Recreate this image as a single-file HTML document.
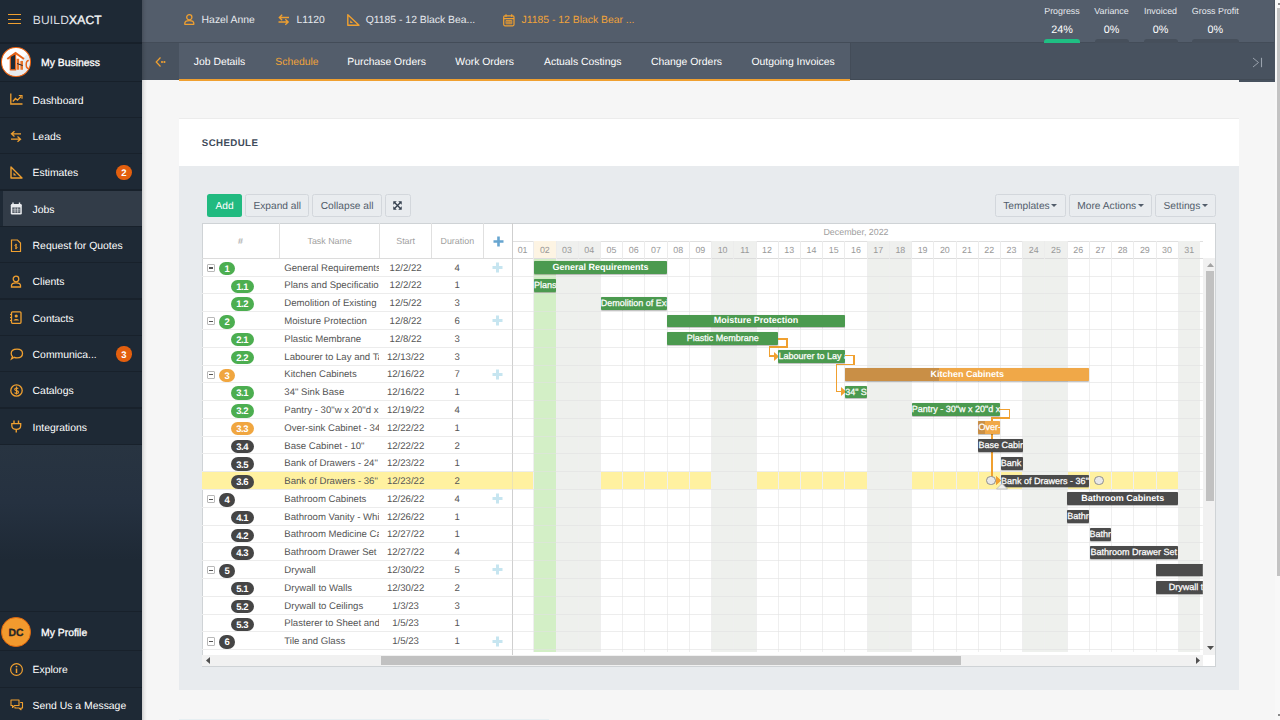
<!DOCTYPE html>
<html><head><meta charset="utf-8"><title>Buildxact Schedule</title>
<style>
*{margin:0;padding:0;box-sizing:border-box}
html,body{width:1280px;height:720px;overflow:hidden;background:#f6f6f6;font-family:"Liberation Sans", sans-serif;text-rendering:geometricPrecision}
.a{position:absolute}
.t{position:absolute;white-space:nowrap;line-height:1}
svg{position:absolute;overflow:visible}
</style></head>
<body>
<div class="a" style="left:0.00px;top:0.00px;width:142.00px;height:720.00px;background:#1e2935;"></div>
<div class="a" style="left:0.00px;top:42.00px;width:142.00px;height:1.50px;background:#17202a;"></div>
<div class="a" style="left:8.00px;top:13.70px;width:13.00px;height:1.40px;background:#f0a030;"></div>
<div class="a" style="left:8.00px;top:18.50px;width:13.00px;height:1.40px;background:#f0a030;"></div>
<div class="a" style="left:8.00px;top:22.70px;width:13.00px;height:1.40px;background:#f0a030;"></div>
<div class="t" style="left:32.70px;top:14px;font-size:12px;color:#d9dde1;letter-spacing:0.2px">BUILD<span style="color:#f2f4f6;-webkit-text-stroke:0.4px #f2f4f6">XACT</span></div>
<div class="a" style="left:0.00px;top:80.50px;width:142.00px;height:1.50px;background:#17202a;"></div>
<div class="a" style="left:1.2px;top:47.4px;width:29.5px;height:29.4px;border-radius:50%;background:linear-gradient(135deg,#fff 55%,#e9ecef 56%);border:1.6px solid #ef6512"></div>
<svg style="left:0px;top:45px" width="34" height="34" viewBox="0 0 34 34"><path d="M7.3 14 L15.5 8 L24 14" stroke="#e8641a" stroke-width="2" fill="none"/><path d="M10.3 11.5 L15.6 8.6 V24.8 H10.3 Z" fill="#1e2935" stroke="#e8641a" stroke-width="1.2"/><path d="M16.6 13.8 H19.2 V24.8 H16.6 Z M20.4 16 H23 V24.8 H20.4 Z" fill="#e8732a"/><path d="M17 18.5 L22.6 20.5" stroke="#1e2935" stroke-width="1"/><path d="M28.8 15.5 C26.4 15.5 26.2 17.5 26.2 19.5 C26.2 21.5 26.4 23.5 28.8 23.5" stroke="#e8641a" stroke-width="1.5" fill="none"/></svg>
<div class="t" style="left:41.00px;top:59px;font-size:10.4px;color:#fff;-webkit-text-stroke:0.3px #fff">My Business</div>
<svg style="left:10px;top:93.00px" width="13" height="13" viewBox="0 0 13 13"><path d="M0.8 0.5 V11 H12.5" stroke="#f0a030" stroke-width="1.3" fill="none"/><path d="M2.8 8.5 L5.5 5.5 L7.5 7.2 L11 3.5" stroke="#f0a030" stroke-width="1.3" fill="none"/><path d="M8.8 2.5 H12 V5.7" stroke="#f0a030" stroke-width="1.2" fill="none"/></svg>
<div class="t" style="left:32.60px;top:97px;font-size:10.4px;color:#fff">Dashboard</div>
<div class="a" style="left:0.00px;top:116.73px;width:142.00px;height:1.20px;background:#18212b;"></div>
<svg style="left:10px;top:129.50px" width="13" height="13" viewBox="0 0 13 13"><path d="M11 3.8 H2 M4.5 1.2 L1.5 3.8 L4.5 6.4" stroke="#f0a030" stroke-width="1.3" fill="none"/><path d="M1 9.2 H10 M7.5 6.6 L10.5 9.2 L7.5 11.8" stroke="#f0a030" stroke-width="1.3" fill="none"/></svg>
<div class="t" style="left:32.60px;top:133px;font-size:10.4px;color:#fff">Leads</div>
<div class="a" style="left:0.00px;top:153.06px;width:142.00px;height:1.20px;background:#18212b;"></div>
<svg style="left:10px;top:165.80px" width="13" height="13" viewBox="0 0 13 13"><path d="M1 1 V12 H12 Z" stroke="#f0a030" stroke-width="1.4" fill="none" stroke-linejoin="round"/><path d="M3.5 6.5 V9.5 H6.5 Z" fill="#f0a030"/></svg>
<div class="t" style="left:32.60px;top:169px;font-size:10.4px;color:#fff">Estimates</div>
<div class="a" style="left:116.3px;top:164.70px;width:15.4px;height:15.4px;border-radius:50%;background:#e35f0e"></div>
<div class="t" style="left:116.30px;top:169px;font-size:9.5px;width:15.40px;text-align:center;color:#fff;font-weight:bold">2</div>
<div class="a" style="left:3.00px;top:190.59px;width:139.00px;height:35.50px;background:#323c48;"></div>
<div class="a" style="left:0.00px;top:189.39px;width:142.00px;height:1.20px;background:#18212b;"></div>
<svg style="left:10px;top:202.20px" width="13" height="13" viewBox="0 0 13 13"><rect x="0.8" y="2" width="11" height="10.5" rx="1.2" fill="#e9ebee"/><rect x="2.3" y="5.5" width="8" height="5.3" fill="#323c48"/><path d="M3 0.5 V3 M9.5 0.5 V3" stroke="#e9ebee" stroke-width="1.4"/><path d="M2.3 7.2 H10.3 M2.3 9 H10.3 M5 5.5 V10.8 M7.7 5.5 V10.8" stroke="#e9ebee" stroke-width="0.7"/></svg>
<div class="t" style="left:32.60px;top:206px;font-size:10.4px;color:#fff">Jobs</div>
<div class="a" style="left:0.00px;top:225.72px;width:142.00px;height:1.20px;background:#18212b;"></div>
<svg style="left:10px;top:238.50px" width="13" height="13" viewBox="0 0 13 13"><path d="M1.5 1 H7.5 L10.5 4 V12.5 H1.5 Z" stroke="#f0a030" stroke-width="1.2" fill="none"/><path d="M7 6 C5 5 4 6.5 6 7.5 C8 8.5 7 10 5 9 M6 4.8 V10.2" stroke="#f0a030" stroke-width="1" fill="none"/></svg>
<div class="t" style="left:32.60px;top:242px;font-size:10.4px;color:#fff">Request for Quotes</div>
<div class="a" style="left:0.00px;top:262.05px;width:142.00px;height:1.20px;background:#18212b;"></div>
<svg style="left:10px;top:274.50px" width="13" height="13" viewBox="0 0 13 13"><circle cx="6" cy="4" r="2.8" stroke="#f0a030" stroke-width="1.3" fill="none"/><path d="M1.5 12 V10.5 C1.5 8.5 3 7.8 6 7.8 C9 7.8 10.5 8.5 10.5 10.5 V12 Z" stroke="#f0a030" stroke-width="1.3" fill="none"/></svg>
<div class="t" style="left:32.60px;top:278px;font-size:10.4px;color:#fff">Clients</div>
<div class="a" style="left:0.00px;top:298.38px;width:142.00px;height:1.20px;background:#18212b;"></div>
<svg style="left:10px;top:311.10px" width="13" height="13" viewBox="0 0 13 13"><rect x="1.5" y="0.8" width="9.5" height="11.5" rx="1" stroke="#f0a030" stroke-width="1.3" fill="none"/><circle cx="6.2" cy="5" r="1.6" fill="#f0a030"/><path d="M3.5 9.5 C4 7.5 8.5 7.5 9 9.5 Z" fill="#f0a030"/><path d="M0 3.5 H2 M0 6.5 H2 M0 9.5 H2" stroke="#f0a030" stroke-width="1"/></svg>
<div class="t" style="left:32.60px;top:315px;font-size:10.4px;color:#fff">Contacts</div>
<div class="a" style="left:0.00px;top:334.71px;width:142.00px;height:1.20px;background:#18212b;"></div>
<svg style="left:10px;top:347.50px" width="13" height="13" viewBox="0 0 13 13"><path d="M7 1.2 C10.5 1.2 12.5 3 12.5 5.5 C12.5 8 10.5 9.8 7 9.8 C6 9.8 5 9.6 4.3 9.3 L1.5 11 L2.5 8.5 C1.6 7.7 1.2 6.7 1.2 5.5 C1.2 3 3.5 1.2 7 1.2 Z" stroke="#f0a030" stroke-width="1.3" fill="none"/></svg>
<div class="t" style="left:32.60px;top:351px;font-size:10.4px;color:#fff">Communica...</div>
<div class="a" style="left:116.3px;top:346.40px;width:15.4px;height:15.4px;border-radius:50%;background:#e35f0e"></div>
<div class="t" style="left:116.30px;top:351px;font-size:9.5px;width:15.40px;text-align:center;color:#fff;font-weight:bold">3</div>
<div class="a" style="left:0.00px;top:371.04px;width:142.00px;height:1.20px;background:#18212b;"></div>
<svg style="left:10px;top:383.80px" width="13" height="13" viewBox="0 0 13 13"><circle cx="6.5" cy="6.5" r="5.7" stroke="#f0a030" stroke-width="1.3" fill="none"/><path d="M8.3 4.5 C7.5 3.7 4.5 3.7 4.7 5.5 C4.9 7 8.5 6.3 8.5 8.2 C8.5 9.7 5.5 9.6 4.5 8.6 M6.5 2.6 V10.4" stroke="#f0a030" stroke-width="1.1" fill="none"/></svg>
<div class="t" style="left:32.60px;top:387px;font-size:10.4px;color:#fff">Catalogs</div>
<div class="a" style="left:0.00px;top:407.37px;width:142.00px;height:1.20px;background:#18212b;"></div>
<svg style="left:10px;top:420.10px" width="13" height="13" viewBox="0 0 13 13"><path d="M4 0.5 V3.5 M8.5 0.5 V3.5" stroke="#f0a030" stroke-width="1.4"/><path d="M1.8 3.6 H10.7 V5.5 C10.7 8 8.7 9.4 6.25 9.4 C3.8 9.4 1.8 8 1.8 5.5 Z" stroke="#f0a030" stroke-width="1.3" fill="none"/><path d="M6.25 9.4 V12.5" stroke="#f0a030" stroke-width="1.4"/></svg>
<div class="t" style="left:32.60px;top:424px;font-size:10.4px;color:#fff">Integrations</div>
<div class="a" style="left:0.00px;top:443.70px;width:142.00px;height:1.20px;background:#18212b;"></div>
<div class="a" style="left:0.00px;top:444.90px;width:142.00px;height:115.00px;background:linear-gradient(#283441,#253140 50%,#1e2935);"></div>
<div class="a" style="left:0.00px;top:611.20px;width:142.00px;height:1.20px;background:#18212b;"></div>
<div class="a" style="left:1.3px;top:617.3px;width:29.5px;height:29.5px;border-radius:50%;background:#f29a2e;border:1.8px solid #e3680c"></div>
<div class="t" style="left:1.30px;top:629px;font-size:10.4px;width:29.50px;text-align:center;color:#262626;font-weight:bold;-webkit-text-stroke:0.3px #262626">DC</div>
<div class="t" style="left:41.00px;top:629px;font-size:10.4px;color:#fff;-webkit-text-stroke:0.3px #fff">My Profile</div>
<div class="a" style="left:0.00px;top:650.20px;width:142.00px;height:1.20px;background:#18212b;"></div>
<svg style="left:10px;top:662.5px" width="13" height="13" viewBox="0 0 13 13"><circle cx="6.5" cy="6.5" r="5.9" stroke="#f0a030" stroke-width="1.2" fill="none"/><path d="M6.5 5.5 V10" stroke="#f0a030" stroke-width="1.5"/><circle cx="6.5" cy="3.6" r="0.9" fill="#f0a030"/></svg>
<div class="t" style="left:32.60px;top:666px;font-size:10.4px;color:#fff">Explore</div>
<div class="a" style="left:0.00px;top:687.00px;width:142.00px;height:1.20px;background:#18212b;"></div>
<svg style="left:10px;top:699px" width="13" height="13" viewBox="0 0 13 13"><path d="M1 1 H9 V6.5 H4.5 L2.5 8.5 V6.5 H1 Z" stroke="#f0a030" stroke-width="1.1" fill="none" stroke-linejoin="round"/><path d="M10.2 3.5 H12.5 V9 H11 V10.8 L9 9 H5 V7.8" stroke="#f0a030" stroke-width="1.1" fill="none" stroke-linejoin="round"/></svg>
<div class="t" style="left:32.60px;top:702px;font-size:10.4px;color:#fff">Send Us a Message</div>
<div class="a" style="left:142.00px;top:0.00px;width:1132.60px;height:43.00px;background:#535d6b;"></div>
<div class="a" style="left:142.00px;top:42.00px;width:1132.60px;height:1.20px;background:#434c58;"></div>
<svg style="left:183.6px;top:14px" width="12" height="12" viewBox="0 0 12 12"><circle cx="5.3" cy="3.3" r="2.6" stroke="#f0a030" stroke-width="1.3" fill="none"/><path d="M0.8 10.3 V9.3 C0.8 7.4 2.5 6.6 5.3 6.6 C8.1 6.6 9.8 7.4 9.8 9.3 V10.3 Z" stroke="#f0a030" stroke-width="1.3" fill="none" stroke-linejoin="round"/></svg>
<div class="t" style="left:201.60px;top:16px;font-size:10.4px;color:#e6e9ee">Hazel Anne</div>
<svg style="left:277.8px;top:14px" width="12" height="12" viewBox="0 0 12 12"><path d="M11 3.5 H1.5 M4.2 0.8 L1.3 3.5 L4.2 6.2" stroke="#f0a030" stroke-width="1.3" fill="none"/><path d="M0.5 8 H10 M7.3 5.3 L10.2 8 L7.3 10.7" stroke="#f0a030" stroke-width="1.3" fill="none"/></svg>
<div class="t" style="left:296.60px;top:16px;font-size:10.4px;color:#e6e9ee">L1120</div>
<svg style="left:346.6px;top:14px" width="12" height="12" viewBox="0 0 12 12"><path d="M0.8 0.8 V11.3 H12 Z" stroke="#f0a030" stroke-width="1.4" fill="none" stroke-linejoin="round"/><path d="M3.2 6.3 V9 H6 Z" fill="#f0a030"/></svg>
<div class="t" style="left:365.70px;top:16px;font-size:10.4px;color:#e6e9ee">Q1185 - 12 Black Bea...</div>
<svg style="left:502.9px;top:14px" width="12" height="12" viewBox="0 0 12 12"><rect x="0.7" y="1.8" width="10.3" height="10" rx="1.2" stroke="#f0a030" stroke-width="1.2" fill="none"/><path d="M3 0.3 V3 M8.7 0.3 V3 M0.7 4.6 H11" stroke="#f0a030" stroke-width="1.2"/><path d="M3 6.5 H8.8 V9.8 H3 Z M5 6.5 V9.8 M6.9 6.5 V9.8 M3 8.1 H8.8" stroke="#f0a030" stroke-width="0.8" fill="none"/></svg>
<div class="t" style="left:521.50px;top:16px;font-size:10.4px;color:#f0a33a">J1185 - 12 Black Bear ...</div>
<div class="t" style="left:1022.00px;top:7px;font-size:8.9px;width:80.00px;text-align:center;color:#e6e9ee">Progress</div>
<div class="t" style="left:1022.00px;top:25px;font-size:10.8px;width:80.00px;text-align:center;color:#fff">24%</div>
<div class="t" style="left:1071.50px;top:7px;font-size:8.9px;width:80.00px;text-align:center;color:#e6e9ee">Variance</div>
<div class="t" style="left:1071.50px;top:25px;font-size:10.8px;width:80.00px;text-align:center;color:#fff">0%</div>
<div class="t" style="left:1120.50px;top:7px;font-size:8.9px;width:80.00px;text-align:center;color:#e6e9ee">Invoiced</div>
<div class="t" style="left:1120.50px;top:25px;font-size:10.8px;width:80.00px;text-align:center;color:#fff">0%</div>
<div class="t" style="left:1175.30px;top:7px;font-size:8.9px;width:80.00px;text-align:center;color:#e6e9ee">Gross Profit</div>
<div class="t" style="left:1175.30px;top:25px;font-size:10.8px;width:80.00px;text-align:center;color:#fff">0%</div>
<div class="a" style="left:1044.00px;top:38.80px;width:36.00px;height:5.00px;background:#1fbf83;border-radius:3px 3px 0 0"></div>
<div class="a" style="left:1094.50px;top:38.80px;width:34.00px;height:5.00px;background:#464f5b;border-radius:3px 3px 0 0"></div>
<div class="a" style="left:1143.50px;top:38.80px;width:34.00px;height:5.00px;background:#464f5b;border-radius:3px 3px 0 0"></div>
<div class="a" style="left:1191.50px;top:38.80px;width:47.50px;height:5.00px;background:#464f5b;border-radius:3px 3px 0 0"></div>
<div class="a" style="left:142.00px;top:43.20px;width:1132.60px;height:37.30px;background:#48525f;"></div>
<div class="a" style="left:179.00px;top:43.20px;width:671.00px;height:37.30px;background:#535d6b;"></div>
<div class="a" style="left:179.00px;top:78.80px;width:671.00px;height:2.20px;background:#f0a030;"></div>
<div class="a" style="left:849.60px;top:43.20px;width:1.00px;height:37.30px;background:#434c58;"></div>
<div class="a" style="left:850.50px;top:79.40px;width:424.10px;height:1.10px;background:#414a55;"></div>
<div class="a" style="left:1238.50px;top:79.50px;width:36.10px;height:2.20px;background:#48525f;"></div>
<svg style="left:155px;top:56px" width="12" height="12" viewBox="0 0 12 12"><path d="M5.5 1.5 L1.2 6 L5.5 10.5" stroke="#f0a030" stroke-width="1.2" fill="none"/><circle cx="7" cy="6" r="0.9" fill="#f0a030"/><circle cx="9.6" cy="6" r="0.9" fill="#f0a030"/><path d="M6 6 H10" stroke="#f0a030" stroke-width="0.7"/></svg>
<div class="t" style="left:193.75px;top:58px;font-size:10.4px;color:#fff">Job Details</div>
<div class="t" style="left:275.25px;top:58px;font-size:10.4px;color:#f0a33a">Schedule</div>
<div class="t" style="left:347.30px;top:58px;font-size:10.4px;color:#fff">Purchase Orders</div>
<div class="t" style="left:455.30px;top:58px;font-size:10.4px;color:#fff">Work Orders</div>
<div class="t" style="left:544.00px;top:58px;font-size:10.4px;color:#fff">Actuals Costings</div>
<div class="t" style="left:651.00px;top:58px;font-size:10.4px;color:#fff">Change Orders</div>
<div class="t" style="left:751.50px;top:58px;font-size:10.4px;color:#fff">Outgoing Invoices</div>
<svg style="left:1251.5px;top:56.5px" width="12" height="11" viewBox="0 0 12 11"><path d="M1 1 L6.5 5.5 L1 10" stroke="#9aa2ad" stroke-width="1" fill="none"/><path d="M9.5 0.8 V10.2" stroke="#9aa2ad" stroke-width="1.1"/></svg>
<div class="a" style="left:1274.60px;top:0.00px;width:5.40px;height:720.00px;background:#f8f8f8;"></div>
<div class="a" style="left:1274.00px;top:0.00px;width:1.00px;height:81.00px;background:#4a535f;"></div>
<div class="a" style="left:1277.00px;top:8.30px;width:3.00px;height:567.30px;background:#c3c3c3;"></div>
<div class="a" style="left:1278.00px;top:2.50px;width:2.00px;height:2.20px;background:#8a8a8a;"></div>
<div class="a" style="left:1278.00px;top:714.00px;width:2.00px;height:2.20px;background:#8a8a8a;"></div>
<div class="a" style="left:178.70px;top:118.30px;width:1060.30px;height:47.60px;background:#fff;border-top:0.6px solid #ececec"></div>
<div class="a" style="left:178.70px;top:165.90px;width:1060.30px;height:524.00px;background:#e8ebee;"></div>
<div class="t" style="left:201.80px;top:139px;font-size:9.7px;font-weight:bold;color:#404b5a;letter-spacing:0.4px">SCHEDULE</div>
<div class="a" style="left:207.00px;top:194.30px;width:35.00px;height:22.40px;background:#21ba80;border-radius:2.5px"></div>
<div class="t" style="left:207.00px;top:202px;font-size:10.2px;width:35.00px;text-align:center;color:#fff">Add</div>
<div class="a" style="left:245.30px;top:194.30px;width:63.90px;height:22.40px;background:#e9ecef;border-radius:2.5px;border:0.8px solid #d3d7dc"></div>
<div class="t" style="left:245.30px;top:202px;font-size:10.2px;width:63.90px;text-align:center;color:#525d6b">Expand all</div>
<div class="a" style="left:312.40px;top:194.30px;width:69.40px;height:22.40px;background:#e9ecef;border-radius:2.5px;border:0.8px solid #d3d7dc"></div>
<div class="t" style="left:312.40px;top:202px;font-size:10.2px;width:69.40px;text-align:center;color:#525d6b">Collapse all</div>
<div class="a" style="left:385.20px;top:194.30px;width:25.60px;height:22.40px;background:#e9ecef;border-radius:2.5px;border:0.8px solid #d3d7dc"></div>
<svg style="left:393.1px;top:200.9px" width="9" height="9" viewBox="0 0 10 10"><path d="M2 2 L8 8 M8 2 L2 8" stroke="#36414f" stroke-width="1.5"/><path d="M0.3 0.3 H4.2 L0.3 4.2 Z M9.7 0.3 H5.8 L9.7 4.2 Z M0.3 9.7 H4.2 L0.3 5.8 Z M9.7 9.7 H5.8 L9.7 5.8 Z" fill="#36414f"/></svg>
<div class="a" style="left:994.75px;top:194.30px;width:70.95px;height:22.40px;background:#e9ecef;border-radius:2.5px;border:0.8px solid #d3d7dc"></div>
<div class="t" style="left:994.75px;top:202px;font-size:10.2px;width:70.95px;text-align:center;color:#525d6b">Templates<span style="display:inline-block;width:0;height:0;border-left:3px solid transparent;border-right:3px solid transparent;border-top:3px solid #525d6b;vertical-align:middle;margin-left:1.5px;position:relative;top:-1px"></span></div>
<div class="a" style="left:1069.00px;top:194.30px;width:83.00px;height:22.40px;background:#e9ecef;border-radius:2.5px;border:0.8px solid #d3d7dc"></div>
<div class="t" style="left:1069.00px;top:202px;font-size:10.2px;width:83.00px;text-align:center;color:#525d6b">More Actions<span style="display:inline-block;width:0;height:0;border-left:3px solid transparent;border-right:3px solid transparent;border-top:3px solid #525d6b;vertical-align:middle;margin-left:1.5px;position:relative;top:-1px"></span></div>
<div class="a" style="left:1155.30px;top:194.30px;width:60.80px;height:22.40px;background:#e9ecef;border-radius:2.5px;border:0.8px solid #d3d7dc"></div>
<div class="t" style="left:1155.30px;top:202px;font-size:10.2px;width:60.80px;text-align:center;color:#525d6b">Settings<span style="display:inline-block;width:0;height:0;border-left:3px solid transparent;border-right:3px solid transparent;border-top:3px solid #525d6b;vertical-align:middle;margin-left:1.5px;position:relative;top:-1px"></span></div>
<div class="a" style="left:201.50px;top:222.70px;width:1014.50px;height:444.30px;background:#fff;border:0.8px solid #cfd3d6"></div>
<div class="a" style="left:278.90px;top:222.70px;width:1.00px;height:35.60px;background:#e0e0e0;"></div>
<div class="a" style="left:378.90px;top:222.70px;width:1.00px;height:35.60px;background:#e0e0e0;"></div>
<div class="a" style="left:430.75px;top:222.70px;width:1.00px;height:35.60px;background:#e0e0e0;"></div>
<div class="a" style="left:482.60px;top:222.70px;width:1.00px;height:35.60px;background:#e0e0e0;"></div>
<div class="t" style="left:200.50px;top:237px;font-size:8.9px;width:80.00px;text-align:center;color:#a0a0a0">#</div>
<div class="t" style="left:289.70px;top:237px;font-size:8.9px;width:80.00px;text-align:center;color:#a0a0a0">Task Name</div>
<div class="t" style="left:365.60px;top:237px;font-size:8.9px;width:80.00px;text-align:center;color:#a0a0a0">Start</div>
<div class="t" style="left:417.30px;top:237px;font-size:8.9px;width:80.00px;text-align:center;color:#a0a0a0">Duration</div>
<svg style="left:492.5px;top:235.5px" width="11" height="11" viewBox="0 0 11 11"><path d="M5.5 0.5 V10.5 M0.5 5.5 H10.5" stroke="#67a5d0" stroke-width="2.6"/></svg>
<div class="t" style="left:781.00px;top:228px;font-size:8.9px;width:150.00px;text-align:center;color:#a0a0a0">December, 2022</div>
<div class="a" style="left:512.40px;top:240.60px;width:690.40px;height:1.00px;background:#e0e0e0;"></div>
<div class="t" style="left:511.50px;top:246px;font-size:8.9px;width:22.22px;text-align:center;color:#999">01</div>
<div class="a" style="left:533.72px;top:241.10px;width:22.22px;height:17.20px;background:#fdf4e3;"></div>
<div class="a" style="left:533.32px;top:241.10px;width:0.80px;height:17.20px;background:#ececec;"></div>
<div class="t" style="left:533.72px;top:246px;font-size:8.9px;width:22.22px;text-align:center;color:#999">02</div>
<div class="a" style="left:555.94px;top:241.10px;width:22.22px;height:17.20px;background:#eff0ee;"></div>
<div class="a" style="left:555.54px;top:241.10px;width:0.80px;height:17.20px;background:#ececec;"></div>
<div class="t" style="left:555.94px;top:246px;font-size:8.9px;width:22.22px;text-align:center;color:#999">03</div>
<div class="a" style="left:578.17px;top:241.10px;width:22.22px;height:17.20px;background:#eff0ee;"></div>
<div class="a" style="left:577.77px;top:241.10px;width:0.80px;height:17.20px;background:#ececec;"></div>
<div class="t" style="left:578.17px;top:246px;font-size:8.9px;width:22.22px;text-align:center;color:#999">04</div>
<div class="a" style="left:599.99px;top:241.10px;width:0.80px;height:17.20px;background:#ececec;"></div>
<div class="t" style="left:600.39px;top:246px;font-size:8.9px;width:22.22px;text-align:center;color:#999">05</div>
<div class="a" style="left:622.21px;top:241.10px;width:0.80px;height:17.20px;background:#ececec;"></div>
<div class="t" style="left:622.61px;top:246px;font-size:8.9px;width:22.22px;text-align:center;color:#999">06</div>
<div class="a" style="left:644.43px;top:241.10px;width:0.80px;height:17.20px;background:#ececec;"></div>
<div class="t" style="left:644.83px;top:246px;font-size:8.9px;width:22.22px;text-align:center;color:#999">07</div>
<div class="a" style="left:666.65px;top:241.10px;width:0.80px;height:17.20px;background:#ececec;"></div>
<div class="t" style="left:667.05px;top:246px;font-size:8.9px;width:22.22px;text-align:center;color:#999">08</div>
<div class="a" style="left:688.88px;top:241.10px;width:0.80px;height:17.20px;background:#ececec;"></div>
<div class="t" style="left:689.28px;top:246px;font-size:8.9px;width:22.22px;text-align:center;color:#999">09</div>
<div class="a" style="left:711.50px;top:241.10px;width:22.22px;height:17.20px;background:#eff0ee;"></div>
<div class="a" style="left:711.10px;top:241.10px;width:0.80px;height:17.20px;background:#ececec;"></div>
<div class="t" style="left:711.50px;top:246px;font-size:8.9px;width:22.22px;text-align:center;color:#999">10</div>
<div class="a" style="left:733.72px;top:241.10px;width:22.22px;height:17.20px;background:#eff0ee;"></div>
<div class="a" style="left:733.32px;top:241.10px;width:0.80px;height:17.20px;background:#ececec;"></div>
<div class="t" style="left:733.72px;top:246px;font-size:8.9px;width:22.22px;text-align:center;color:#999">11</div>
<div class="a" style="left:755.54px;top:241.10px;width:0.80px;height:17.20px;background:#ececec;"></div>
<div class="t" style="left:755.94px;top:246px;font-size:8.9px;width:22.22px;text-align:center;color:#999">12</div>
<div class="a" style="left:777.76px;top:241.10px;width:0.80px;height:17.20px;background:#ececec;"></div>
<div class="t" style="left:778.16px;top:246px;font-size:8.9px;width:22.22px;text-align:center;color:#999">13</div>
<div class="a" style="left:799.99px;top:241.10px;width:0.80px;height:17.20px;background:#ececec;"></div>
<div class="t" style="left:800.39px;top:246px;font-size:8.9px;width:22.22px;text-align:center;color:#999">14</div>
<div class="a" style="left:822.21px;top:241.10px;width:0.80px;height:17.20px;background:#ececec;"></div>
<div class="t" style="left:822.61px;top:246px;font-size:8.9px;width:22.22px;text-align:center;color:#999">15</div>
<div class="a" style="left:844.43px;top:241.10px;width:0.80px;height:17.20px;background:#ececec;"></div>
<div class="t" style="left:844.83px;top:246px;font-size:8.9px;width:22.22px;text-align:center;color:#999">16</div>
<div class="a" style="left:867.05px;top:241.10px;width:22.22px;height:17.20px;background:#eff0ee;"></div>
<div class="a" style="left:866.65px;top:241.10px;width:0.80px;height:17.20px;background:#ececec;"></div>
<div class="t" style="left:867.05px;top:246px;font-size:8.9px;width:22.22px;text-align:center;color:#999">17</div>
<div class="a" style="left:889.27px;top:241.10px;width:22.22px;height:17.20px;background:#eff0ee;"></div>
<div class="a" style="left:888.87px;top:241.10px;width:0.80px;height:17.20px;background:#ececec;"></div>
<div class="t" style="left:889.27px;top:246px;font-size:8.9px;width:22.22px;text-align:center;color:#999">18</div>
<div class="a" style="left:911.10px;top:241.10px;width:0.80px;height:17.20px;background:#ececec;"></div>
<div class="t" style="left:911.50px;top:246px;font-size:8.9px;width:22.22px;text-align:center;color:#999">19</div>
<div class="a" style="left:933.32px;top:241.10px;width:0.80px;height:17.20px;background:#ececec;"></div>
<div class="t" style="left:933.72px;top:246px;font-size:8.9px;width:22.22px;text-align:center;color:#999">20</div>
<div class="a" style="left:955.54px;top:241.10px;width:0.80px;height:17.20px;background:#ececec;"></div>
<div class="t" style="left:955.94px;top:246px;font-size:8.9px;width:22.22px;text-align:center;color:#999">21</div>
<div class="a" style="left:977.76px;top:241.10px;width:0.80px;height:17.20px;background:#ececec;"></div>
<div class="t" style="left:978.16px;top:246px;font-size:8.9px;width:22.22px;text-align:center;color:#999">22</div>
<div class="a" style="left:999.98px;top:241.10px;width:0.80px;height:17.20px;background:#ececec;"></div>
<div class="t" style="left:1000.38px;top:246px;font-size:8.9px;width:22.22px;text-align:center;color:#999">23</div>
<div class="a" style="left:1022.61px;top:241.10px;width:22.22px;height:17.20px;background:#eff0ee;"></div>
<div class="a" style="left:1022.21px;top:241.10px;width:0.80px;height:17.20px;background:#ececec;"></div>
<div class="t" style="left:1022.61px;top:246px;font-size:8.9px;width:22.22px;text-align:center;color:#999">24</div>
<div class="a" style="left:1044.83px;top:241.10px;width:22.22px;height:17.20px;background:#eff0ee;"></div>
<div class="a" style="left:1044.43px;top:241.10px;width:0.80px;height:17.20px;background:#ececec;"></div>
<div class="t" style="left:1044.83px;top:246px;font-size:8.9px;width:22.22px;text-align:center;color:#999">25</div>
<div class="a" style="left:1066.65px;top:241.10px;width:0.80px;height:17.20px;background:#ececec;"></div>
<div class="t" style="left:1067.05px;top:246px;font-size:8.9px;width:22.22px;text-align:center;color:#999">26</div>
<div class="a" style="left:1088.87px;top:241.10px;width:0.80px;height:17.20px;background:#ececec;"></div>
<div class="t" style="left:1089.27px;top:246px;font-size:8.9px;width:22.22px;text-align:center;color:#999">27</div>
<div class="a" style="left:1111.09px;top:241.10px;width:0.80px;height:17.20px;background:#ececec;"></div>
<div class="t" style="left:1111.49px;top:246px;font-size:8.9px;width:22.22px;text-align:center;color:#999">28</div>
<div class="a" style="left:1133.32px;top:241.10px;width:0.80px;height:17.20px;background:#ececec;"></div>
<div class="t" style="left:1133.72px;top:246px;font-size:8.9px;width:22.22px;text-align:center;color:#999">29</div>
<div class="a" style="left:1155.54px;top:241.10px;width:0.80px;height:17.20px;background:#ececec;"></div>
<div class="t" style="left:1155.94px;top:246px;font-size:8.9px;width:22.22px;text-align:center;color:#999">30</div>
<div class="a" style="left:1178.16px;top:241.10px;width:22.22px;height:17.20px;background:#eff0ee;"></div>
<div class="a" style="left:1177.76px;top:241.10px;width:0.80px;height:17.20px;background:#ececec;"></div>
<div class="t" style="left:1178.16px;top:246px;font-size:8.9px;width:22.22px;text-align:center;color:#999">31</div>
<div class="a" style="left:201.50px;top:257.70px;width:1001.30px;height:1.20px;background:#dcdcdc;"></div>
<div class="a" style="left:202.30px;top:275.59px;width:309.60px;height:0.90px;background:#ececec;"></div>
<div class="a" style="left:206.80px;top:263.89px;width:8.10px;height:8.20px;background:#fff;border:0.9px solid #b8b8b8;border-radius:1px"></div>
<div class="a" style="left:209.00px;top:267.44px;width:3.80px;height:1.30px;background:#555;"></div>
<div class="a" style="left:219.20px;top:261.79px;width:15.60px;height:13.50px;background:#4cae50;border-radius:7px"></div>
<div class="t" style="left:219.20px;top:265px;font-size:9.5px;width:15.60px;text-align:center;color:#fff;font-weight:bold;letter-spacing:-0.2px">1</div>
<div class="a" style="left:284.3px;top:262.69px;width:95px;overflow:hidden;white-space:nowrap;font-size:9.6px;line-height:11px;color:#555">General Requirements</div>
<div class="t" style="left:380px;width:51.25px;text-align:center;top:262.69px;font-size:9.6px;line-height:11px;color:#555">12/2/22</div>
<div class="t" style="left:431.25px;width:51.85px;text-align:center;top:262.69px;font-size:9.6px;line-height:11px;color:#555">4</div>
<svg style="left:492px;top:261.99px" width="11" height="11" viewBox="0 0 11 11"><path d="M5.5 0.5 V10.5 M0.5 5.5 H10.5" stroke="#c6e5f0" stroke-width="3"/></svg>
<div class="a" style="left:202.30px;top:293.37px;width:309.60px;height:0.90px;background:#ececec;"></div>
<div class="a" style="left:230.90px;top:279.58px;width:22.70px;height:13.50px;background:#4cae50;border-radius:7px"></div>
<div class="t" style="left:230.90px;top:283px;font-size:9.5px;width:22.70px;text-align:center;color:#fff;font-weight:bold;letter-spacing:-0.4px">1.1</div>
<div class="a" style="left:284.3px;top:280.48px;width:95px;overflow:hidden;white-space:nowrap;font-size:9.6px;line-height:11px;color:#555">Plans and Specificatio</div>
<div class="t" style="left:380px;width:51.25px;text-align:center;top:280.48px;font-size:9.6px;line-height:11px;color:#555">12/2/22</div>
<div class="t" style="left:431.25px;width:51.85px;text-align:center;top:280.48px;font-size:9.6px;line-height:11px;color:#555">1</div>
<div class="a" style="left:202.30px;top:311.16px;width:309.60px;height:0.90px;background:#ececec;"></div>
<div class="a" style="left:230.90px;top:297.37px;width:22.70px;height:13.50px;background:#4cae50;border-radius:7px"></div>
<div class="t" style="left:230.90px;top:300px;font-size:9.5px;width:22.70px;text-align:center;color:#fff;font-weight:bold;letter-spacing:-0.4px">1.2</div>
<div class="a" style="left:284.3px;top:298.26px;width:95px;overflow:hidden;white-space:nowrap;font-size:9.6px;line-height:11px;color:#555">Demolition of Existing</div>
<div class="t" style="left:380px;width:51.25px;text-align:center;top:298.26px;font-size:9.6px;line-height:11px;color:#555">12/5/22</div>
<div class="t" style="left:431.25px;width:51.85px;text-align:center;top:298.26px;font-size:9.6px;line-height:11px;color:#555">3</div>
<div class="a" style="left:202.30px;top:328.94px;width:309.60px;height:0.90px;background:#ececec;"></div>
<div class="a" style="left:206.80px;top:317.25px;width:8.10px;height:8.20px;background:#fff;border:0.9px solid #b8b8b8;border-radius:1px"></div>
<div class="a" style="left:209.00px;top:320.80px;width:3.80px;height:1.30px;background:#555;"></div>
<div class="a" style="left:219.20px;top:315.15px;width:15.60px;height:13.50px;background:#4cae50;border-radius:7px"></div>
<div class="t" style="left:219.20px;top:318px;font-size:9.5px;width:15.60px;text-align:center;color:#fff;font-weight:bold;letter-spacing:-0.2px">2</div>
<div class="a" style="left:284.3px;top:316.05px;width:95px;overflow:hidden;white-space:nowrap;font-size:9.6px;line-height:11px;color:#555">Moisture Protection</div>
<div class="t" style="left:380px;width:51.25px;text-align:center;top:316.05px;font-size:9.6px;line-height:11px;color:#555">12/8/22</div>
<div class="t" style="left:431.25px;width:51.85px;text-align:center;top:316.05px;font-size:9.6px;line-height:11px;color:#555">6</div>
<svg style="left:492px;top:315.35px" width="11" height="11" viewBox="0 0 11 11"><path d="M5.5 0.5 V10.5 M0.5 5.5 H10.5" stroke="#c6e5f0" stroke-width="3"/></svg>
<div class="a" style="left:202.30px;top:346.73px;width:309.60px;height:0.90px;background:#ececec;"></div>
<div class="a" style="left:230.90px;top:332.94px;width:22.70px;height:13.50px;background:#4cae50;border-radius:7px"></div>
<div class="t" style="left:230.90px;top:336px;font-size:9.5px;width:22.70px;text-align:center;color:#fff;font-weight:bold;letter-spacing:-0.4px">2.1</div>
<div class="a" style="left:284.3px;top:333.84px;width:95px;overflow:hidden;white-space:nowrap;font-size:9.6px;line-height:11px;color:#555">Plastic Membrane</div>
<div class="t" style="left:380px;width:51.25px;text-align:center;top:333.84px;font-size:9.6px;line-height:11px;color:#555">12/8/22</div>
<div class="t" style="left:431.25px;width:51.85px;text-align:center;top:333.84px;font-size:9.6px;line-height:11px;color:#555">3</div>
<div class="a" style="left:202.30px;top:364.52px;width:309.60px;height:0.90px;background:#ececec;"></div>
<div class="a" style="left:230.90px;top:350.72px;width:22.70px;height:13.50px;background:#4cae50;border-radius:7px"></div>
<div class="t" style="left:230.90px;top:354px;font-size:9.5px;width:22.70px;text-align:center;color:#fff;font-weight:bold;letter-spacing:-0.4px">2.2</div>
<div class="a" style="left:284.3px;top:351.62px;width:95px;overflow:hidden;white-space:nowrap;font-size:9.6px;line-height:11px;color:#555">Labourer to Lay and Tape</div>
<div class="t" style="left:380px;width:51.25px;text-align:center;top:351.62px;font-size:9.6px;line-height:11px;color:#555">12/13/22</div>
<div class="t" style="left:431.25px;width:51.85px;text-align:center;top:351.62px;font-size:9.6px;line-height:11px;color:#555">3</div>
<div class="a" style="left:202.30px;top:382.30px;width:309.60px;height:0.90px;background:#ececec;"></div>
<div class="a" style="left:206.80px;top:370.61px;width:8.10px;height:8.20px;background:#fff;border:0.9px solid #b8b8b8;border-radius:1px"></div>
<div class="a" style="left:209.00px;top:374.16px;width:3.80px;height:1.30px;background:#555;"></div>
<div class="a" style="left:219.20px;top:368.51px;width:15.60px;height:13.50px;background:#f0a640;border-radius:7px"></div>
<div class="t" style="left:219.20px;top:372px;font-size:9.5px;width:15.60px;text-align:center;color:#fff;font-weight:bold;letter-spacing:-0.2px">3</div>
<div class="a" style="left:284.3px;top:369.41px;width:95px;overflow:hidden;white-space:nowrap;font-size:9.6px;line-height:11px;color:#555">Kitchen Cabinets</div>
<div class="t" style="left:380px;width:51.25px;text-align:center;top:369.41px;font-size:9.6px;line-height:11px;color:#555">12/16/22</div>
<div class="t" style="left:431.25px;width:51.85px;text-align:center;top:369.41px;font-size:9.6px;line-height:11px;color:#555">7</div>
<svg style="left:492px;top:368.71px" width="11" height="11" viewBox="0 0 11 11"><path d="M5.5 0.5 V10.5 M0.5 5.5 H10.5" stroke="#c6e5f0" stroke-width="3"/></svg>
<div class="a" style="left:202.30px;top:400.09px;width:309.60px;height:0.90px;background:#ececec;"></div>
<div class="a" style="left:230.90px;top:386.30px;width:22.70px;height:13.50px;background:#4cae50;border-radius:7px"></div>
<div class="t" style="left:230.90px;top:389px;font-size:9.5px;width:22.70px;text-align:center;color:#fff;font-weight:bold;letter-spacing:-0.4px">3.1</div>
<div class="a" style="left:284.3px;top:387.20px;width:95px;overflow:hidden;white-space:nowrap;font-size:9.6px;line-height:11px;color:#555">34" Sink Base</div>
<div class="t" style="left:380px;width:51.25px;text-align:center;top:387.20px;font-size:9.6px;line-height:11px;color:#555">12/16/22</div>
<div class="t" style="left:431.25px;width:51.85px;text-align:center;top:387.20px;font-size:9.6px;line-height:11px;color:#555">1</div>
<div class="a" style="left:202.30px;top:417.87px;width:309.60px;height:0.90px;background:#ececec;"></div>
<div class="a" style="left:230.90px;top:404.08px;width:22.70px;height:13.50px;background:#4cae50;border-radius:7px"></div>
<div class="t" style="left:230.90px;top:407px;font-size:9.5px;width:22.70px;text-align:center;color:#fff;font-weight:bold;letter-spacing:-0.4px">3.2</div>
<div class="a" style="left:284.3px;top:404.98px;width:95px;overflow:hidden;white-space:nowrap;font-size:9.6px;line-height:11px;color:#555">Pantry - 30"w x 20"d x 84"h</div>
<div class="t" style="left:380px;width:51.25px;text-align:center;top:404.98px;font-size:9.6px;line-height:11px;color:#555">12/19/22</div>
<div class="t" style="left:431.25px;width:51.85px;text-align:center;top:404.98px;font-size:9.6px;line-height:11px;color:#555">4</div>
<div class="a" style="left:202.30px;top:435.66px;width:309.60px;height:0.90px;background:#ececec;"></div>
<div class="a" style="left:230.90px;top:421.87px;width:22.70px;height:13.50px;background:#f0a640;border-radius:7px"></div>
<div class="t" style="left:230.90px;top:425px;font-size:9.5px;width:22.70px;text-align:center;color:#fff;font-weight:bold;letter-spacing:-0.4px">3.3</div>
<div class="a" style="left:284.3px;top:422.77px;width:95px;overflow:hidden;white-space:nowrap;font-size:9.6px;line-height:11px;color:#555">Over-sink Cabinet - 34"</div>
<div class="t" style="left:380px;width:51.25px;text-align:center;top:422.77px;font-size:9.6px;line-height:11px;color:#555">12/22/22</div>
<div class="t" style="left:431.25px;width:51.85px;text-align:center;top:422.77px;font-size:9.6px;line-height:11px;color:#555">1</div>
<div class="a" style="left:202.30px;top:453.45px;width:309.60px;height:0.90px;background:#ececec;"></div>
<div class="a" style="left:230.90px;top:439.65px;width:22.70px;height:13.50px;background:#454545;border-radius:7px"></div>
<div class="t" style="left:230.90px;top:443px;font-size:9.5px;width:22.70px;text-align:center;color:#fff;font-weight:bold;letter-spacing:-0.4px">3.4</div>
<div class="a" style="left:284.3px;top:440.55px;width:95px;overflow:hidden;white-space:nowrap;font-size:9.6px;line-height:11px;color:#555">Base Cabinet - 10"</div>
<div class="t" style="left:380px;width:51.25px;text-align:center;top:440.55px;font-size:9.6px;line-height:11px;color:#555">12/22/22</div>
<div class="t" style="left:431.25px;width:51.85px;text-align:center;top:440.55px;font-size:9.6px;line-height:11px;color:#555">2</div>
<div class="a" style="left:202.30px;top:471.23px;width:309.60px;height:0.90px;background:#ececec;"></div>
<div class="a" style="left:230.90px;top:457.44px;width:22.70px;height:13.50px;background:#454545;border-radius:7px"></div>
<div class="t" style="left:230.90px;top:461px;font-size:9.5px;width:22.70px;text-align:center;color:#fff;font-weight:bold;letter-spacing:-0.4px">3.5</div>
<div class="a" style="left:284.3px;top:458.34px;width:95px;overflow:hidden;white-space:nowrap;font-size:9.6px;line-height:11px;color:#555">Bank of Drawers - 24"</div>
<div class="t" style="left:380px;width:51.25px;text-align:center;top:458.34px;font-size:9.6px;line-height:11px;color:#555">12/23/22</div>
<div class="t" style="left:431.25px;width:51.85px;text-align:center;top:458.34px;font-size:9.6px;line-height:11px;color:#555">1</div>
<div class="a" style="left:202.30px;top:472.23px;width:975.80px;height:17.19px;background:#fff1a0;"></div>
<div class="a" style="left:202.30px;top:489.02px;width:309.60px;height:0.90px;background:#ececec;"></div>
<div class="a" style="left:230.90px;top:475.23px;width:22.70px;height:13.50px;background:#454545;border-radius:7px"></div>
<div class="t" style="left:230.90px;top:478px;font-size:9.5px;width:22.70px;text-align:center;color:#fff;font-weight:bold;letter-spacing:-0.4px">3.6</div>
<div class="a" style="left:284.3px;top:476.12px;width:95px;overflow:hidden;white-space:nowrap;font-size:9.6px;line-height:11px;color:#555">Bank of Drawers - 36"</div>
<div class="t" style="left:380px;width:51.25px;text-align:center;top:476.12px;font-size:9.6px;line-height:11px;color:#555">12/23/22</div>
<div class="t" style="left:431.25px;width:51.85px;text-align:center;top:476.12px;font-size:9.6px;line-height:11px;color:#555">2</div>
<div class="a" style="left:202.30px;top:506.80px;width:309.60px;height:0.90px;background:#ececec;"></div>
<div class="a" style="left:206.80px;top:495.11px;width:8.10px;height:8.20px;background:#fff;border:0.9px solid #b8b8b8;border-radius:1px"></div>
<div class="a" style="left:209.00px;top:498.66px;width:3.80px;height:1.30px;background:#555;"></div>
<div class="a" style="left:219.20px;top:493.01px;width:15.60px;height:13.50px;background:#454545;border-radius:7px"></div>
<div class="t" style="left:219.20px;top:496px;font-size:9.5px;width:15.60px;text-align:center;color:#fff;font-weight:bold;letter-spacing:-0.2px">4</div>
<div class="a" style="left:284.3px;top:493.91px;width:95px;overflow:hidden;white-space:nowrap;font-size:9.6px;line-height:11px;color:#555">Bathroom Cabinets</div>
<div class="t" style="left:380px;width:51.25px;text-align:center;top:493.91px;font-size:9.6px;line-height:11px;color:#555">12/26/22</div>
<div class="t" style="left:431.25px;width:51.85px;text-align:center;top:493.91px;font-size:9.6px;line-height:11px;color:#555">4</div>
<svg style="left:492px;top:493.21px" width="11" height="11" viewBox="0 0 11 11"><path d="M5.5 0.5 V10.5 M0.5 5.5 H10.5" stroke="#c6e5f0" stroke-width="3"/></svg>
<div class="a" style="left:202.30px;top:524.59px;width:309.60px;height:0.90px;background:#ececec;"></div>
<div class="a" style="left:230.90px;top:510.80px;width:22.70px;height:13.50px;background:#454545;border-radius:7px"></div>
<div class="t" style="left:230.90px;top:514px;font-size:9.5px;width:22.70px;text-align:center;color:#fff;font-weight:bold;letter-spacing:-0.4px">4.1</div>
<div class="a" style="left:284.3px;top:511.70px;width:95px;overflow:hidden;white-space:nowrap;font-size:9.6px;line-height:11px;color:#555">Bathroom Vanity - White</div>
<div class="t" style="left:380px;width:51.25px;text-align:center;top:511.70px;font-size:9.6px;line-height:11px;color:#555">12/26/22</div>
<div class="t" style="left:431.25px;width:51.85px;text-align:center;top:511.70px;font-size:9.6px;line-height:11px;color:#555">1</div>
<div class="a" style="left:202.30px;top:542.38px;width:309.60px;height:0.90px;background:#ececec;"></div>
<div class="a" style="left:230.90px;top:528.58px;width:22.70px;height:13.50px;background:#454545;border-radius:7px"></div>
<div class="t" style="left:230.90px;top:532px;font-size:9.5px;width:22.70px;text-align:center;color:#fff;font-weight:bold;letter-spacing:-0.4px">4.2</div>
<div class="a" style="left:284.3px;top:529.48px;width:95px;overflow:hidden;white-space:nowrap;font-size:9.6px;line-height:11px;color:#555">Bathroom Medicine Cabinet</div>
<div class="t" style="left:380px;width:51.25px;text-align:center;top:529.48px;font-size:9.6px;line-height:11px;color:#555">12/27/22</div>
<div class="t" style="left:431.25px;width:51.85px;text-align:center;top:529.48px;font-size:9.6px;line-height:11px;color:#555">1</div>
<div class="a" style="left:202.30px;top:560.16px;width:309.60px;height:0.90px;background:#ececec;"></div>
<div class="a" style="left:230.90px;top:546.37px;width:22.70px;height:13.50px;background:#454545;border-radius:7px"></div>
<div class="t" style="left:230.90px;top:549px;font-size:9.5px;width:22.70px;text-align:center;color:#fff;font-weight:bold;letter-spacing:-0.4px">4.3</div>
<div class="a" style="left:284.3px;top:547.27px;width:95px;overflow:hidden;white-space:nowrap;font-size:9.6px;line-height:11px;color:#555">Bathroom Drawer Set</div>
<div class="t" style="left:380px;width:51.25px;text-align:center;top:547.27px;font-size:9.6px;line-height:11px;color:#555">12/27/22</div>
<div class="t" style="left:431.25px;width:51.85px;text-align:center;top:547.27px;font-size:9.6px;line-height:11px;color:#555">4</div>
<div class="a" style="left:202.30px;top:577.95px;width:309.60px;height:0.90px;background:#ececec;"></div>
<div class="a" style="left:206.80px;top:566.26px;width:8.10px;height:8.20px;background:#fff;border:0.9px solid #b8b8b8;border-radius:1px"></div>
<div class="a" style="left:209.00px;top:569.81px;width:3.80px;height:1.30px;background:#555;"></div>
<div class="a" style="left:219.20px;top:564.16px;width:15.60px;height:13.50px;background:#454545;border-radius:7px"></div>
<div class="t" style="left:219.20px;top:567px;font-size:9.5px;width:15.60px;text-align:center;color:#fff;font-weight:bold;letter-spacing:-0.2px">5</div>
<div class="a" style="left:284.3px;top:565.06px;width:95px;overflow:hidden;white-space:nowrap;font-size:9.6px;line-height:11px;color:#555">Drywall</div>
<div class="t" style="left:380px;width:51.25px;text-align:center;top:565.06px;font-size:9.6px;line-height:11px;color:#555">12/30/22</div>
<div class="t" style="left:431.25px;width:51.85px;text-align:center;top:565.06px;font-size:9.6px;line-height:11px;color:#555">5</div>
<svg style="left:492px;top:564.36px" width="11" height="11" viewBox="0 0 11 11"><path d="M5.5 0.5 V10.5 M0.5 5.5 H10.5" stroke="#c6e5f0" stroke-width="3"/></svg>
<div class="a" style="left:202.30px;top:595.73px;width:309.60px;height:0.90px;background:#ececec;"></div>
<div class="a" style="left:230.90px;top:581.94px;width:22.70px;height:13.50px;background:#454545;border-radius:7px"></div>
<div class="t" style="left:230.90px;top:585px;font-size:9.5px;width:22.70px;text-align:center;color:#fff;font-weight:bold;letter-spacing:-0.4px">5.1</div>
<div class="a" style="left:284.3px;top:582.84px;width:95px;overflow:hidden;white-space:nowrap;font-size:9.6px;line-height:11px;color:#555">Drywall to Walls</div>
<div class="t" style="left:380px;width:51.25px;text-align:center;top:582.84px;font-size:9.6px;line-height:11px;color:#555">12/30/22</div>
<div class="t" style="left:431.25px;width:51.85px;text-align:center;top:582.84px;font-size:9.6px;line-height:11px;color:#555">2</div>
<div class="a" style="left:202.30px;top:613.52px;width:309.60px;height:0.90px;background:#ececec;"></div>
<div class="a" style="left:230.90px;top:599.73px;width:22.70px;height:13.50px;background:#454545;border-radius:7px"></div>
<div class="t" style="left:230.90px;top:603px;font-size:9.5px;width:22.70px;text-align:center;color:#fff;font-weight:bold;letter-spacing:-0.4px">5.2</div>
<div class="a" style="left:284.3px;top:600.63px;width:95px;overflow:hidden;white-space:nowrap;font-size:9.6px;line-height:11px;color:#555">Drywall to Ceilings</div>
<div class="t" style="left:380px;width:51.25px;text-align:center;top:600.63px;font-size:9.6px;line-height:11px;color:#555">1/3/23</div>
<div class="t" style="left:431.25px;width:51.85px;text-align:center;top:600.63px;font-size:9.6px;line-height:11px;color:#555">3</div>
<div class="a" style="left:202.30px;top:631.31px;width:309.60px;height:0.90px;background:#ececec;"></div>
<div class="a" style="left:230.90px;top:617.51px;width:22.70px;height:13.50px;background:#454545;border-radius:7px"></div>
<div class="t" style="left:230.90px;top:621px;font-size:9.5px;width:22.70px;text-align:center;color:#fff;font-weight:bold;letter-spacing:-0.4px">5.3</div>
<div class="a" style="left:284.3px;top:618.41px;width:95px;overflow:hidden;white-space:nowrap;font-size:9.6px;line-height:11px;color:#555">Plasterer to Sheet and Tape</div>
<div class="t" style="left:380px;width:51.25px;text-align:center;top:618.41px;font-size:9.6px;line-height:11px;color:#555">1/5/23</div>
<div class="t" style="left:431.25px;width:51.85px;text-align:center;top:618.41px;font-size:9.6px;line-height:11px;color:#555">1</div>
<div class="a" style="left:202.30px;top:649.09px;width:309.60px;height:0.90px;background:#ececec;"></div>
<div class="a" style="left:206.80px;top:637.40px;width:8.10px;height:8.20px;background:#fff;border:0.9px solid #b8b8b8;border-radius:1px"></div>
<div class="a" style="left:209.00px;top:640.95px;width:3.80px;height:1.30px;background:#555;"></div>
<div class="a" style="left:219.20px;top:635.30px;width:15.60px;height:13.50px;background:#454545;border-radius:7px"></div>
<div class="t" style="left:219.20px;top:638px;font-size:9.5px;width:15.60px;text-align:center;color:#fff;font-weight:bold;letter-spacing:-0.2px">6</div>
<div class="a" style="left:284.3px;top:636.20px;width:95px;overflow:hidden;white-space:nowrap;font-size:9.6px;line-height:11px;color:#555">Tile and Glass</div>
<div class="t" style="left:380px;width:51.25px;text-align:center;top:636.20px;font-size:9.6px;line-height:11px;color:#555">1/5/23</div>
<div class="t" style="left:431.25px;width:51.85px;text-align:center;top:636.20px;font-size:9.6px;line-height:11px;color:#555">1</div>
<svg style="left:492px;top:635.50px" width="11" height="11" viewBox="0 0 11 11"><path d="M5.5 0.5 V10.5 M0.5 5.5 H10.5" stroke="#c6e5f0" stroke-width="3"/></svg>
<div class="a" style="left:511.90px;top:222.70px;width:1.00px;height:432.30px;background:#cfcfcf;"></div>
<div class="a" style="left:0;top:0;width:1280px;height:720px;clip-path:inset(258.3px 77.20px 65.00px 512.4px)">
<div class="a" style="left:512.40px;top:472.23px;width:665.70px;height:17.19px;background:#fff1a0;"></div>
<div class="a" style="left:533.72px;top:258.90px;width:22.22px;height:393.10px;background:#d3efc6;"></div>
<div class="a" style="left:533.32px;top:258.30px;width:0.80px;height:393.70px;background:#efefef;"></div>
<div class="a" style="left:555.94px;top:258.90px;width:22.22px;height:393.10px;background:#eef0ed;"></div>
<div class="a" style="left:555.54px;top:258.30px;width:0.80px;height:393.70px;background:#efefef;"></div>
<div class="a" style="left:578.17px;top:258.90px;width:22.22px;height:393.10px;background:#eef0ed;"></div>
<div class="a" style="left:577.77px;top:258.30px;width:0.80px;height:393.70px;background:#efefef;"></div>
<div class="a" style="left:599.99px;top:258.30px;width:0.80px;height:393.70px;background:#efefef;"></div>
<div class="a" style="left:622.21px;top:258.30px;width:0.80px;height:393.70px;background:#efefef;"></div>
<div class="a" style="left:644.43px;top:258.30px;width:0.80px;height:393.70px;background:#efefef;"></div>
<div class="a" style="left:666.65px;top:258.30px;width:0.80px;height:393.70px;background:#efefef;"></div>
<div class="a" style="left:688.88px;top:258.30px;width:0.80px;height:393.70px;background:#efefef;"></div>
<div class="a" style="left:711.50px;top:258.90px;width:22.22px;height:393.10px;background:#eef0ed;"></div>
<div class="a" style="left:711.10px;top:258.30px;width:0.80px;height:393.70px;background:#efefef;"></div>
<div class="a" style="left:733.72px;top:258.90px;width:22.22px;height:393.10px;background:#eef0ed;"></div>
<div class="a" style="left:733.32px;top:258.30px;width:0.80px;height:393.70px;background:#efefef;"></div>
<div class="a" style="left:755.54px;top:258.30px;width:0.80px;height:393.70px;background:#efefef;"></div>
<div class="a" style="left:777.76px;top:258.30px;width:0.80px;height:393.70px;background:#efefef;"></div>
<div class="a" style="left:799.99px;top:258.30px;width:0.80px;height:393.70px;background:#efefef;"></div>
<div class="a" style="left:822.21px;top:258.30px;width:0.80px;height:393.70px;background:#efefef;"></div>
<div class="a" style="left:844.43px;top:258.30px;width:0.80px;height:393.70px;background:#efefef;"></div>
<div class="a" style="left:867.05px;top:258.90px;width:22.22px;height:393.10px;background:#eef0ed;"></div>
<div class="a" style="left:866.65px;top:258.30px;width:0.80px;height:393.70px;background:#efefef;"></div>
<div class="a" style="left:889.27px;top:258.90px;width:22.22px;height:393.10px;background:#eef0ed;"></div>
<div class="a" style="left:888.87px;top:258.30px;width:0.80px;height:393.70px;background:#efefef;"></div>
<div class="a" style="left:911.10px;top:258.30px;width:0.80px;height:393.70px;background:#efefef;"></div>
<div class="a" style="left:933.32px;top:258.30px;width:0.80px;height:393.70px;background:#efefef;"></div>
<div class="a" style="left:955.54px;top:258.30px;width:0.80px;height:393.70px;background:#efefef;"></div>
<div class="a" style="left:977.76px;top:258.30px;width:0.80px;height:393.70px;background:#efefef;"></div>
<div class="a" style="left:999.98px;top:258.30px;width:0.80px;height:393.70px;background:#efefef;"></div>
<div class="a" style="left:1022.61px;top:258.90px;width:22.22px;height:393.10px;background:#eef0ed;"></div>
<div class="a" style="left:1022.21px;top:258.30px;width:0.80px;height:393.70px;background:#efefef;"></div>
<div class="a" style="left:1044.83px;top:258.90px;width:22.22px;height:393.10px;background:#eef0ed;"></div>
<div class="a" style="left:1044.43px;top:258.30px;width:0.80px;height:393.70px;background:#efefef;"></div>
<div class="a" style="left:1066.65px;top:258.30px;width:0.80px;height:393.70px;background:#efefef;"></div>
<div class="a" style="left:1088.87px;top:258.30px;width:0.80px;height:393.70px;background:#efefef;"></div>
<div class="a" style="left:1111.09px;top:258.30px;width:0.80px;height:393.70px;background:#efefef;"></div>
<div class="a" style="left:1133.32px;top:258.30px;width:0.80px;height:393.70px;background:#efefef;"></div>
<div class="a" style="left:1155.54px;top:258.30px;width:0.80px;height:393.70px;background:#efefef;"></div>
<div class="a" style="left:1178.16px;top:258.90px;width:22.22px;height:393.10px;background:#eef0ed;"></div>
<div class="a" style="left:1177.76px;top:258.30px;width:0.80px;height:393.70px;background:#efefef;"></div>
<div class="a" style="left:512.40px;top:275.59px;width:690.40px;height:0.90px;background:rgba(225,225,225,.6);"></div>
<div class="a" style="left:512.40px;top:293.37px;width:690.40px;height:0.90px;background:rgba(225,225,225,.6);"></div>
<div class="a" style="left:512.40px;top:311.16px;width:690.40px;height:0.90px;background:rgba(225,225,225,.6);"></div>
<div class="a" style="left:512.40px;top:328.94px;width:690.40px;height:0.90px;background:rgba(225,225,225,.6);"></div>
<div class="a" style="left:512.40px;top:346.73px;width:690.40px;height:0.90px;background:rgba(225,225,225,.6);"></div>
<div class="a" style="left:512.40px;top:364.52px;width:690.40px;height:0.90px;background:rgba(225,225,225,.6);"></div>
<div class="a" style="left:512.40px;top:382.30px;width:690.40px;height:0.90px;background:rgba(225,225,225,.6);"></div>
<div class="a" style="left:512.40px;top:400.09px;width:690.40px;height:0.90px;background:rgba(225,225,225,.6);"></div>
<div class="a" style="left:512.40px;top:417.87px;width:690.40px;height:0.90px;background:rgba(225,225,225,.6);"></div>
<div class="a" style="left:512.40px;top:435.66px;width:690.40px;height:0.90px;background:rgba(225,225,225,.6);"></div>
<div class="a" style="left:512.40px;top:453.45px;width:690.40px;height:0.90px;background:rgba(225,225,225,.6);"></div>
<div class="a" style="left:512.40px;top:471.23px;width:690.40px;height:0.90px;background:rgba(225,225,225,.6);"></div>
<div class="a" style="left:512.40px;top:489.02px;width:690.40px;height:0.90px;background:rgba(225,225,225,.6);"></div>
<div class="a" style="left:512.40px;top:506.80px;width:690.40px;height:0.90px;background:rgba(225,225,225,.6);"></div>
<div class="a" style="left:512.40px;top:524.59px;width:690.40px;height:0.90px;background:rgba(225,225,225,.6);"></div>
<div class="a" style="left:512.40px;top:542.38px;width:690.40px;height:0.90px;background:rgba(225,225,225,.6);"></div>
<div class="a" style="left:512.40px;top:560.16px;width:690.40px;height:0.90px;background:rgba(225,225,225,.6);"></div>
<div class="a" style="left:512.40px;top:577.95px;width:690.40px;height:0.90px;background:rgba(225,225,225,.6);"></div>
<div class="a" style="left:512.40px;top:595.73px;width:690.40px;height:0.90px;background:rgba(225,225,225,.6);"></div>
<div class="a" style="left:512.40px;top:613.52px;width:690.40px;height:0.90px;background:rgba(225,225,225,.6);"></div>
<div class="a" style="left:512.40px;top:631.31px;width:690.40px;height:0.90px;background:rgba(225,225,225,.6);"></div>
<div class="a" style="left:512.40px;top:649.09px;width:690.40px;height:0.90px;background:rgba(225,225,225,.6);"></div>
<div class="a" style="left:777.45px;top:338.15px;width:10.50px;height:1.50px;background:#f0a030;"></div>
<div class="a" style="left:786.45px;top:338.15px;width:1.50px;height:9.80px;background:#f0a030;"></div>
<div class="a" style="left:768.65px;top:346.45px;width:19.30px;height:1.50px;background:#f0a030;"></div>
<div class="a" style="left:768.65px;top:346.45px;width:1.50px;height:10.40px;background:#f0a030;"></div>
<div class="a" style="left:768.65px;top:355.35px;width:6.10px;height:1.50px;background:#f0a030;"></div>
<svg style="left:773.50px;top:351.60px" width="5" height="9" viewBox="0 0 5 9"><path d="M0 0 L5 4.5 L0 9 Z" fill="#f0a030"/></svg>
<div class="a" style="left:844.25px;top:354.85px;width:10.70px;height:1.50px;background:#f0a030;"></div>
<div class="a" style="left:853.45px;top:354.85px;width:1.50px;height:10.30px;background:#f0a030;"></div>
<div class="a" style="left:835.65px;top:363.65px;width:19.30px;height:1.50px;background:#f0a030;"></div>
<div class="a" style="left:835.65px;top:363.65px;width:1.50px;height:28.80px;background:#f0a030;"></div>
<div class="a" style="left:835.65px;top:390.95px;width:6.10px;height:1.50px;background:#f0a030;"></div>
<svg style="left:840.50px;top:387.20px" width="5" height="9" viewBox="0 0 5 9"><path d="M0 0 L5 4.5 L0 9 Z" fill="#f0a030"/></svg>
<div class="a" style="left:999.75px;top:408.75px;width:10.50px;height:1.50px;background:#f0a030;"></div>
<div class="a" style="left:1008.75px;top:408.75px;width:1.50px;height:10.20px;background:#f0a030;"></div>
<div class="a" style="left:991.25px;top:417.45px;width:19.00px;height:1.50px;background:#f0a030;"></div>
<div class="a" style="left:991.25px;top:417.45px;width:1.50px;height:64.20px;background:#f0a030;"></div>
<div class="a" style="left:991.25px;top:480.15px;width:5.50px;height:1.50px;background:#f0a030;"></div>
<svg style="left:995.80px;top:476.40px" width="5" height="9" viewBox="0 0 5 9"><path d="M0 0 L5 4.5 L0 9 Z" fill="#f0a030"/></svg>
<div class="a" style="left:534.02px;top:261.20px;width:133.03px;height:12.8px;border-radius:1px;background:#4b9a4f;overflow:hidden;box-shadow:0 0.5px 0.8px rgba(0,0,0,.25)"><div class="a" style="left:0;top:1.9px;width:100%;text-align:center;white-space:nowrap;color:#fff;font-size:9px;font-weight:bold;line-height:1;-webkit-text-stroke:0">General Requirements</div></div>
<div class="a" style="left:534.02px;top:278.99px;width:21.92px;height:12.8px;border-radius:1px;background:#4b9a4f;overflow:hidden;box-shadow:0 0.5px 0.8px rgba(0,0,0,.25)"><div class="a" style="left:0;top:1.9px;width:100%;text-align:center;white-space:nowrap;color:#fff;font-size:9px;font-weight:normal;line-height:1;-webkit-text-stroke:0.25px #fff">Plans and Specifications</div></div>
<div class="a" style="left:600.69px;top:296.77px;width:66.37px;height:12.8px;border-radius:1px;background:#4b9a4f;overflow:hidden;box-shadow:0 0.5px 0.8px rgba(0,0,0,.25)"><div class="a" style="left:0;top:1.9px;width:100%;text-align:center;white-space:nowrap;color:#fff;font-size:9px;font-weight:normal;line-height:1;-webkit-text-stroke:0.25px #fff">Demolition of Existing</div></div>
<div class="a" style="left:667.35px;top:314.56px;width:177.48px;height:12.8px;border-radius:1px;background:#4b9a4f;overflow:hidden;box-shadow:0 0.5px 0.8px rgba(0,0,0,.25)"><div class="a" style="left:0;top:1.9px;width:100%;text-align:center;white-space:nowrap;color:#fff;font-size:9px;font-weight:bold;line-height:1;-webkit-text-stroke:0">Moisture Protection</div></div>
<div class="a" style="left:667.35px;top:332.34px;width:110.81px;height:12.8px;border-radius:1px;background:#4b9a4f;overflow:hidden;box-shadow:0 0.5px 0.8px rgba(0,0,0,.25)"><div class="a" style="left:0;top:1.9px;width:100%;text-align:center;white-space:nowrap;color:#fff;font-size:9px;font-weight:normal;line-height:1;-webkit-text-stroke:0.25px #fff">Plastic Membrane</div></div>
<div class="a" style="left:778.46px;top:350.13px;width:66.37px;height:12.8px;border-radius:1px;background:#4b9a4f;overflow:hidden;box-shadow:0 0.5px 0.8px rgba(0,0,0,.25)"><div class="a" style="left:0;top:1.9px;width:100%;text-align:center;white-space:nowrap;color:#fff;font-size:9px;font-weight:normal;line-height:1;-webkit-text-stroke:0.25px #fff">Labourer to Lay and Tape</div></div>
<div class="a" style="left:845.13px;top:367.92px;width:244.14px;height:12.8px;border-radius:1px;background:#f0a848;overflow:hidden;box-shadow:0 0.5px 0.8px rgba(0,0,0,.25)"><div class="a" style="left:0;top:0;width:93.87px;height:100%;background:#c98f46"></div><div class="a" style="left:0;top:1.9px;width:100%;text-align:center;white-space:nowrap;color:#fff;font-size:9px;font-weight:bold;line-height:1;-webkit-text-stroke:0">Kitchen Cabinets</div></div>
<div class="a" style="left:845.13px;top:385.70px;width:21.92px;height:12.8px;border-radius:1px;background:#4b9a4f;overflow:hidden;box-shadow:0 0.5px 0.8px rgba(0,0,0,.25)"><div class="a" style="left:0;top:1.9px;width:100%;text-align:center;white-space:nowrap;color:#fff;font-size:9px;font-weight:normal;line-height:1;-webkit-text-stroke:0.25px #fff">34" Sink Base</div></div>
<div class="a" style="left:911.80px;top:403.49px;width:88.59px;height:12.8px;border-radius:1px;background:#4b9a4f;overflow:hidden;box-shadow:0 0.5px 0.8px rgba(0,0,0,.25)"><div class="a" style="left:0;top:1.9px;width:100%;text-align:center;white-space:nowrap;color:#fff;font-size:9px;font-weight:normal;line-height:1;-webkit-text-stroke:0.25px #fff">Pantry - 30"w x 20"d x 84"h</div></div>
<div class="a" style="left:978.46px;top:421.27px;width:21.92px;height:12.8px;border-radius:1px;background:#f0a848;overflow:hidden;box-shadow:0 0.5px 0.8px rgba(0,0,0,.25)"><div class="a" style="left:0;top:0;width:6.54px;height:100%;background:#c98f46"></div><div class="a" style="left:0;top:1.9px;width:100%;text-align:center;white-space:nowrap;color:#fff;font-size:9px;font-weight:normal;line-height:1;-webkit-text-stroke:0.25px #fff">Over-sink Cabinet - 34"</div></div>
<div class="a" style="left:978.46px;top:439.06px;width:44.14px;height:12.8px;border-radius:1px;background:#4b4b4b;overflow:hidden;box-shadow:0 0.5px 0.8px rgba(0,0,0,.25)"><div class="a" style="left:0;top:1.9px;width:100%;text-align:center;white-space:nowrap;color:#fff;font-size:9px;font-weight:normal;line-height:1;-webkit-text-stroke:0.25px #fff">Base Cabinet - 10"</div></div>
<div class="a" style="left:1000.68px;top:456.85px;width:21.92px;height:12.8px;border-radius:1px;background:#4b4b4b;overflow:hidden;box-shadow:0 0.5px 0.8px rgba(0,0,0,.25)"><div class="a" style="left:0;top:1.9px;width:100%;text-align:center;white-space:nowrap;color:#fff;font-size:9px;font-weight:normal;line-height:1;-webkit-text-stroke:0.25px #fff">Bank of Drawers - 24"</div></div>
<div class="a" style="left:1000.68px;top:474.63px;width:88.59px;height:12.8px;border-radius:1px;background:#4b4b4b;overflow:hidden;box-shadow:0 0.5px 0.8px rgba(0,0,0,.25)"><div class="a" style="left:0;top:1.9px;width:100%;text-align:center;white-space:nowrap;color:#fff;font-size:9px;font-weight:normal;line-height:1;-webkit-text-stroke:0.25px #fff">Bank of Drawers - 36"</div></div>
<div class="a" style="left:1067.35px;top:492.42px;width:110.81px;height:12.8px;border-radius:1px;background:#4b4b4b;overflow:hidden;box-shadow:0 0.5px 0.8px rgba(0,0,0,.25)"><div class="a" style="left:0;top:1.9px;width:100%;text-align:center;white-space:nowrap;color:#fff;font-size:9px;font-weight:bold;line-height:1;-webkit-text-stroke:0">Bathroom Cabinets</div></div>
<div class="a" style="left:1067.35px;top:510.20px;width:21.92px;height:12.8px;border-radius:1px;background:#4b4b4b;overflow:hidden;box-shadow:0 0.5px 0.8px rgba(0,0,0,.25)"><div class="a" style="left:0;top:1.9px;width:100%;text-align:center;white-space:nowrap;color:#fff;font-size:9px;font-weight:normal;line-height:1;-webkit-text-stroke:0.25px #fff">Bathroom Vanity - White</div></div>
<div class="a" style="left:1089.57px;top:527.99px;width:21.92px;height:12.8px;border-radius:1px;background:#4b4b4b;overflow:hidden;box-shadow:0 0.5px 0.8px rgba(0,0,0,.25)"><div class="a" style="left:0;top:1.9px;width:100%;text-align:center;white-space:nowrap;color:#fff;font-size:9px;font-weight:normal;line-height:1;-webkit-text-stroke:0.25px #fff">Bathroom Medicine Cabinet</div></div>
<div class="a" style="left:1089.57px;top:545.78px;width:88.59px;height:12.8px;border-radius:1px;background:#4b4b4b;overflow:hidden;box-shadow:0 0.5px 0.8px rgba(0,0,0,.25)"><div class="a" style="left:0;top:1.9px;width:100%;text-align:center;white-space:nowrap;color:#fff;font-size:9px;font-weight:normal;line-height:1;-webkit-text-stroke:0.25px #fff">Bathroom Drawer Set</div></div>
<div class="a" style="left:1156.24px;top:563.56px;width:155.25px;height:12.8px;border-radius:1px;background:#4b4b4b;overflow:hidden;box-shadow:0 0.5px 0.8px rgba(0,0,0,.25)"><div class="a" style="left:0;top:1.9px;width:100%;text-align:center;white-space:nowrap;color:#fff;font-size:9px;font-weight:bold;line-height:1;-webkit-text-stroke:0">Drywall</div></div>
<div class="a" style="left:1156.24px;top:581.35px;width:88.59px;height:12.8px;border-radius:1px;background:#4b4b4b;overflow:hidden;box-shadow:0 0.5px 0.8px rgba(0,0,0,.25)"><div class="a" style="left:0;top:1.9px;width:100%;text-align:center;white-space:nowrap;color:#fff;font-size:9px;font-weight:normal;line-height:1;-webkit-text-stroke:0.25px #fff">Drywall to Walls</div></div>
<div class="a" style="left:986.40px;top:476.3px;width:9.2px;height:9.2px;border-radius:50%;background:#e8e8e8;border:0.9px solid #8e8e8e"></div>
<div class="a" style="left:1094.40px;top:476.3px;width:9.2px;height:9.2px;border-radius:50%;background:#e8e8e8;border:0.9px solid #8e8e8e"></div>
<svg style="left:995.80px;top:476.40px" width="5" height="9" viewBox="0 0 5 9"><path d="M0 0 L5 4.5 L0 9 Z" fill="#f0a030"/></svg>
<svg style="left:995.5px;top:483px" width="12" height="6.5" viewBox="0 0 12 6.5"><path d="M0.5 6 L6 0.5 L11.5 6 Z" fill="#efefef" stroke="#b0b0b0" stroke-width="0.7"/></svg>
</div>
<div class="a" style="left:1202.80px;top:258.30px;width:12.20px;height:396.70px;background:#f1f1f1;"></div>
<div class="a" style="left:1205.80px;top:270.60px;width:8.40px;height:230.40px;background:#c1c1c1;"></div>
<svg style="left:1206.5px;top:263px" width="7" height="4" viewBox="0 0 7 4"><path d="M0 4 L3.5 0 L7 4 Z" fill="#a3a3a3"/></svg>
<svg style="left:1206.5px;top:646px" width="7" height="4" viewBox="0 0 7 4"><path d="M0 0 L3.5 4 L7 0 Z" fill="#505050"/></svg>
<div class="a" style="left:202.30px;top:655.00px;width:1000.50px;height:11.20px;background:#f1f1f1;"></div>
<div class="a" style="left:381.00px;top:655.70px;width:580.00px;height:9.00px;background:#c1c1c1;"></div>
<svg style="left:205.5px;top:657px" width="4" height="7" viewBox="0 0 4 7"><path d="M4 0 L0 3.5 L4 7 Z" fill="#505050"/></svg>
<svg style="left:1196px;top:657px" width="4" height="7" viewBox="0 0 4 7"><path d="M0 0 L4 3.5 L0 7 Z" fill="#505050"/></svg>
<div class="a" style="left:179.00px;top:719.00px;width:370.00px;height:1.00px;background:#e6eff2;"></div>
<div class="a" style="left:142.00px;top:0.00px;width:5.00px;height:720.00px;background:linear-gradient(90deg,rgba(0,0,0,.16),rgba(0,0,0,.05) 50%,rgba(0,0,0,0));"></div>
</body></html>
